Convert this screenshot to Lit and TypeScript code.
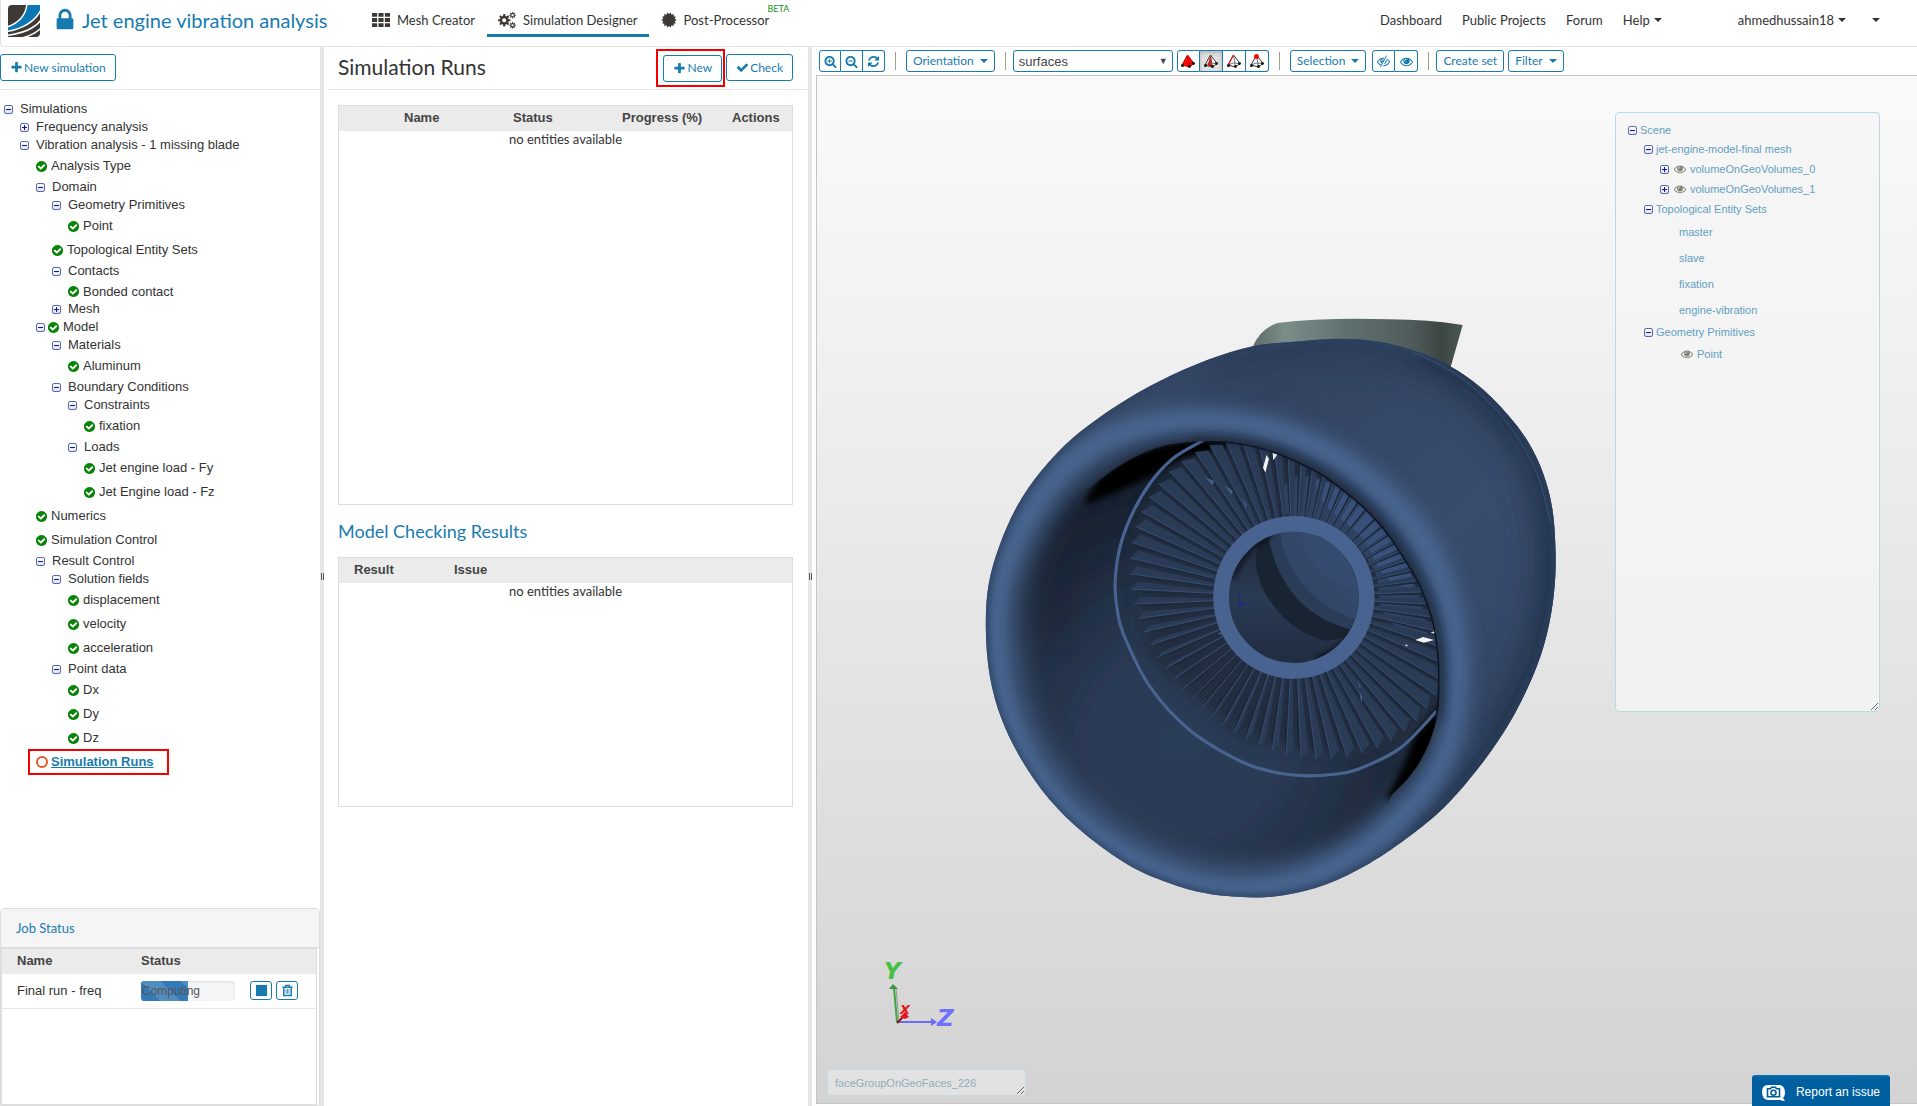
import { LitElement, html, svg, css, nothing } from "lit";
import { customElement, property } from "lit/decorators.js";
import { classMap } from "lit/directives/class-map.js";

type Pt = [number, number];

/* ---------- geometry helpers ---------- */

const n1 = (v: number) => Math.round(v * 10) / 10;

/** Catmull-Rom curve through the given points, as SVG path data. */
function smooth(p: Pt[], closed = false): string {
  const n = p.length;
  const at = (i: number) => (closed ? p[(i + n) % n] : p[Math.max(0, Math.min(n - 1, i))]);
  let d = `M${p[0][0]} ${p[0][1]}`;
  for (let i = 0; i < (closed ? n : n - 1); i++) {
    const [a, b, c, e] = [at(i - 1), at(i), at(i + 1), at(i + 2)];
    d += `C${n1(b[0] + (c[0] - a[0]) / 6)} ${n1(b[1] + (c[1] - a[1]) / 6)} ${n1(c[0] - (e[0] - b[0]) / 6)} ${n1(c[1] - (e[1] - b[1]) / 6)} ${c[0]} ${c[1]}`;
  }
  return closed ? d + "Z" : d;
}

function gear(cx: number, cy: number, r: number, tooth: number, teeth: number, hole: number): string {
  let d = "";
  const step = (Math.PI * 2) / teeth;
  for (let i = 0; i < teeth; i++) {
    const a = i * step;
    const pts: [number, number][] = [
      [a - step * 0.3, r],
      [a - step * 0.2, r + tooth],
      [a + step * 0.2, r + tooth],
      [a + step * 0.3, r],
    ];
    for (const [t, q] of pts) d += `${d ? "L" : "M"}${n1(cx + Math.cos(t) * q)} ${n1(cy + Math.sin(t) * q)}`;
  }
  return `${d}ZM${cx - hole} ${cy}a${hole} ${hole} 0 1 0 ${hole * 2} 0a${hole} ${hole} 0 1 0 ${-hole * 2} 0Z`;
}

function burst(points: number): string {
  let d = "";
  for (let i = 0; i < points * 2; i++) {
    const a = (i * Math.PI) / points;
    const r = i % 2 ? 660 : 860;
    d += `${d ? "L" : "M"}${n1(896 + Math.cos(a) * r)} ${n1(896 + Math.sin(a) * r)}`;
  }
  return d + "Z";
}

/* ---------- icons ---------- */

const LENS =
  "m128 32q0-185-131.5-316.5t-316.5-131.5-316.5 131.5-131.5 316.5 131.5 316.5 316.5 131.5 316.5-131.5 131.5-316.5zm512 832q0 53-37.5 90.5t-90.5 37.5q-54 0-90-38l-343-342q-179 124-399 124-143 0-273.5-55.5t-225-150-150-225-55.5-273.5 55.5-273.5 150-225 225-150 273.5-55.5 273.5 55.5 225 150 150 225 55.5 273.5q0 220-124 399l343 343q37 37 37 90z";
const EYE =
  "M1664 960q-152-236-381-353 61 104 61 225 0 185-131.5 316.5t-316.5 131.5-316.5-131.5-131.5-316.5q0-121 61-225-229 117-381 353 133 205 333.5 326.5t434.5 121.5 434.5-121.5 333.5-326.5zm-720-384q0-20-14-34t-34-14q-125 0-214.5 89.5t-89.5 214.5q0 20 14 34t34 14 34-14 14-34q0-86 61-147t147-61q20 0 34-14t14-34zm848 384q0 34-20 69-140 230-376.5 368.5t-499.5 138.5-499.5-139-376.5-368q-20-35-20-69t20-69q140-229 376.5-368t499.5-139 499.5 139 376.5 368q20 35 20 69z";

const PATHS: Record<string, string> = {
  plus: "M1600 736v192q0 40-28 68t-68 28h-416v416q0 40-28 68t-68 28h-192q-40 0-68-28t-28-68v-416h-416q-40 0-68-28t-28-68v-192q0-40 28-68t68-28h416v-416q0-40 28-68t68-28h192q40 0 68 28t28 68v416h416q40 0 68 28t28 68z",
  check: "M1671 566q0 40-28 68l-724 724-136 136q-28 28-68 28t-68-28l-136-136-362-362q-28-28-28-68t28-68l136-136q28-28 68-28t68 28l294 295 656-657q28-28 68-28t68 28l136 136q28 28 28 68z",
  lock: "M640 768h512v-192q0-106-75-181t-181-75-181 75-75 181v192zm832 96v576q0 40-28 68t-68 28h-960q-40 0-68-28t-28-68v-576q0-40 28-68t68-28h32v-192q0-184 132-316t316-132 316 132 132 316v192h32q40 0 68 28t28 68z",
  done: "M1412 734q0-28-18-46l-91-90q-19-19-45-19t-45 19l-408 407-226-226q-19-19-45-19t-45 19l-91 90q-18 18-18 46 0 27 18 45l362 362q19 19 45 19 27 0 46-19l543-543q18-18 18-45zm252 162q0 209-103 385.5t-279.5 279.5-385.5 103-385.5-103-279.5-279.5-103-385.5 103-385.5 279.5-279.5 385.5-103 385.5 103 279.5 279.5 103 385.5z",
  zoomIn:
    "M1088 800v64q0 13-9.5 22.5t-22.5 9.5h-224v224q0 13-9.5 22.5t-22.5 9.5h-64q-13 0-22.5-9.5t-9.5-22.5v-224h-224q-13 0-22.5-9.5t-9.5-22.5v-64q0-13 9.5-22.5t22.5-9.5h224v-224q0-13 9.5-22.5t22.5-9.5h64q13 0 22.5 9.5t9.5 22.5v224h224q13 0 22.5 9.5t9.5 22.5z" +
    LENS,
  zoomOut:
    "M1088 800v64q0 13-9.5 22.5t-22.5 9.5h-576q-13 0-22.5-9.5t-9.5-22.5v-64q0-13 9.5-22.5t22.5-9.5h576q13 0 22.5 9.5t9.5 22.5z" +
    LENS,
  refresh:
    "M1639 1056q0 5-1 7-64 268-268 434.5t-478 166.5q-146 0-282.5-55t-243.5-157l-129 129q-19 19-45 19t-45-19-19-45v-448q0-26 19-45t45-19h448q26 0 45 19t19 45-19 45l-137 137q71 66 161 102t187 36q134 0 250-65t186-179q11-17 53-117 8-23 30-23h192q13 0 22.5 9.5t9.5 22.5zm25-800v448q0 26-19 45t-45 19h-448q-26 0-45-19t-19-45 19-45l138-138q-148-137-349-137-134 0-250 65t-186 179q-11 17-53 117-8 23-30 23h-199q-13 0-22.5-9.5t-9.5-22.5v-7q65-268 270-434.5t480-166.5q146 0 284 55.5t245 156.5l130-129q19-19 45-19t45 19 19 45z",
  eye: EYE,
  grid: "M0 192h512v384H0zM640 192h512v384H640zM1280 192h512v384h-512zM0 704h512v384H0zM640 704h512v384H640zM1280 704h512v384h-512zM0 1216h512v384H0zM640 1216h512v384H640zM1280 1216h512v384h-512z",
  cogs: gear(620, 920, 450, 170, 8, 210) + gear(1450, 420, 220, 110, 8, 110) + gear(1450, 1420, 220, 110, 8, 110),
  burst: burst(14),
  stop: "M128 128h1536v1536H128z",
};

const icon = (name: string, cls = "") => svg`
  <svg class="icon ${cls}" viewBox="0 0 1792 1792" aria-hidden="true">
    <path fill="currentColor" fill-rule="evenodd" d=${PATHS[name]}></path>
  </svg>`;

const hiddenEye = svg`
  <svg class="icon" viewBox="0 0 1792 1792" aria-hidden="true">
    <path fill="currentColor" d=${EYE}></path>
    <path d="M1400 100L560 1700" stroke="#fff" stroke-width="330"></path>
    <path d="M1290 130L480 1660" stroke="currentColor" stroke-width="130" stroke-linecap="round"></path>
  </svg>`;

const trash = svg`
  <svg class="icon" viewBox="0 0 14 14" aria-hidden="true" fill="none" stroke="currentColor">
    <path d="M1.500 3.500h11M5 3V1.500h4V3" stroke-width="1.400"></path>
    <path d="M3 4v8.500h8V4" stroke-width="1.600"></path>
    <path d="M5.500 5.500v5M7 5.500v5M8.500 5.500v5" stroke-width=".8"></path>
  </svg>`;

const caret = svg`<svg class="caret" viewBox="0 0 8 4" aria-hidden="true"><path fill="currentColor" d="M0 0h8L4 4z"></path></svg>`;

const bubble = svg`
  <svg class="bubble" viewBox="0 0 25 17" aria-hidden="true">
    <path fill="#fff" d="M7 1h12q5 1 5 8 0 3-2 5l2 3q-2 0-5-1H7q-6-1-6-8t6-7z"></path>
    <path fill="none" stroke="#00609f" stroke-width="1.600" d="M6.500 4.800h3l1-1.500h4l1 1.500h3v8h-12z"></path>
    <circle cx="12.500" cy="8.800" r="2.500" fill="none" stroke="#00609f" stroke-width="1.600"></circle>
  </svg>`;

const logo = svg`
  <svg class="logo" viewBox="0 0 32 32" aria-hidden="true">
    <defs><clipPath id="tile"><path d="M4 0H32V28Q32 32 28 32H0V4Q0 0 4 0Z"></path></clipPath></defs>
    <g clip-path="url(#tile)">
      <rect width="32" height="32" fill="#3d3935"></rect>
      <path d="M19 0Q17 16 0 22V26Q24 21 32 6V0Z" fill="#0b78b5"></path>
      <g fill="none" stroke="#fff" stroke-width="1.500">
        <path d="M19 -1Q17 16 -1 22"></path><path d="M33 5Q24 22 -1 26.500"></path>
        <path d="M33 15Q24 27 -1 30.500"></path><path d="M33 23Q26 30 14 33"></path>
      </g>
    </g>
  </svg>`;

/** Tetrahedron glyphs of the four picking modes. */
const tetra = (mode: number) => svg`
  <svg class="tetra" viewBox="0 0 14 14" aria-hidden="true">
    <path d="M6.500 1L1 11l7.500 2L13 9z" fill=${mode === 0 ? "#f30d0d" : "#fff"}></path>
    ${mode === 1 ? svg`<path d="M6.500 1L3.500 11.500l5 1.500z" fill="#f30d0d"></path>` : nothing}
    <path d="M6.500 1L13 9.500 8.500 13 1 11z" fill="none" stroke=${mode === 0 ? "#c00" : "#333"} stroke-width="1"></path>
    <path d="M6.500 1L8.500 13M1 11L6 9l7 .5" fill="none" stroke=${mode === 0 ? "#d00" : "#555"} stroke-width=".8"></path>
    ${mode === 2 ? svg`<path d="M6.500 1L1 11" stroke="#f30d0d" stroke-width="1.200"></path>` : nothing}
    <g fill="#111"><circle cx="1.500" cy="11.500" r="1.500"></circle><circle cx="8.500" cy="12.500" r="1.400"></circle><circle cx="12.500" cy="9.500" r="1.400"></circle></g>
    ${mode === 3 ? svg`<circle cx="6.500" cy="2.500" r="2.500" fill="#f30d0d"></circle>` : nothing}
  </svg>`;

/* ---------- shared styles ---------- */

const shared = css`
  * { box-sizing: border-box; }
  button, select { font: inherit; color: inherit; margin: 0; cursor: pointer; }
  a { color: inherit; text-decoration: none; }
  .icon { display: block; flex: none; width: 14px; height: 14px; }
  .caret { display: block; flex: none; width: 8px; height: 4px; }
  .toggle {
    flex: none; width: 9px; height: 9px; padding: 0; position: relative;
    border: 1px solid #5a6aae; border-radius: 2px;
    background: linear-gradient(#fff, #e0e2ea);
  }
  .toggle::before, .toggle.plus::after {
    content: ""; position: absolute; left: 1px; top: 3px; width: 5px; height: 1px; background: #1010b0;
  }
  .toggle.plus::after { left: 3px; top: 1px; width: 1px; height: 5px; }
`;

/* ---------- navigation trees ---------- */

interface Row {
  label: string;
  level: number;
  kind: "open" | "closed" | "leaf";
  state?: "done" | "todo" | "eye";
  size?: "tight";
}

const r = (level: number, kind: Row["kind"], label: string, state?: Row["state"], size?: Row["size"]): Row => ({ level, kind, label, state, size });

const SIMULATION: Row[] = [
  r(0, "open", "Simulations"),
  r(1, "closed", "Frequency analysis"),
  r(1, "open", "Vibration analysis - 1 missing blade"),
  r(2, "leaf", "Analysis Type", "done"),
  r(2, "open", "Domain"),
  r(3, "open", "Geometry Primitives"),
  r(4, "leaf", "Point", "done"),
  r(3, "leaf", "Topological Entity Sets", "done"),
  r(3, "open", "Contacts"),
  r(4, "leaf", "Bonded contact", "done", "tight"),
  r(3, "closed", "Mesh"),
  r(2, "open", "Model", "done"),
  r(3, "open", "Materials"),
  r(4, "leaf", "Aluminum", "done"),
  r(3, "open", "Boundary Conditions"),
  r(4, "open", "Constraints"),
  r(5, "leaf", "fixation", "done"),
  r(4, "open", "Loads"),
  r(5, "leaf", "Jet engine load - Fy", "done"),
  r(5, "leaf", "Jet Engine load - Fz", "done"),
  r(2, "leaf", "Numerics", "done"),
  r(2, "leaf", "Simulation Control", "done"),
  r(2, "open", "Result Control"),
  r(3, "open", "Solution fields"),
  r(4, "leaf", "displacement", "done"),
  r(4, "leaf", "velocity", "done"),
  r(4, "leaf", "acceleration", "done"),
  r(3, "open", "Point data"),
  r(4, "leaf", "Dx", "done"),
  r(4, "leaf", "Dy", "done"),
  r(4, "leaf", "Dz", "done"),
  r(2, "leaf", "Simulation Runs", "todo"),
];

const SCENE: Row[] = [
  r(0, "open", "Scene", undefined, "tight"),
  r(1, "open", "jet-engine-model-final mesh"),
  r(2, "closed", "volumeOnGeoVolumes_0", "eye"),
  r(2, "closed", "volumeOnGeoVolumes_1", "eye"),
  r(1, "open", "Topological Entity Sets"),
  r(3, "leaf", "master"),
  r(3, "leaf", "slave"),
  r(3, "leaf", "fixation"),
  r(3, "leaf", "engine-vibration"),
  r(1, "open", "Geometry Primitives", undefined, "tight"),
  r(3, "leaf", "Point", "eye"),
];

@customElement("nav-tree")
export class NavTree extends LitElement {
  @property({ attribute: false }) rows: Row[] = [];

  static styles = [
    shared,
    css`
      :host { display: block; }
      ul { list-style: none; margin: 0; padding: 0; }
      .row { display: flex; align-items: center; height: var(--row, 18px); white-space: nowrap; }
      .row.leaf { height: var(--leaf, 24px); padding-left: var(--leaf-pad, 0px); }
      .row.tight { height: 18px; }
      .row.leaf.tight { height: 20px; padding-top: 3px; }
      .l1 { margin-left: 16px; } .l2 { margin-left: 32px; } .l3 { margin-left: 48px; }
      .l4 { margin-left: 64px; } .l5 { margin-left: 80px; }
      .toggle { margin-right: var(--label-gap, 7px); }
      .done { color: #078307; width: 13px; height: 13px; margin: 0 3px 0 -1px; }
      .row:not(.leaf) .toggle:has(+ .done) { margin-right: 3px; }
      .ring { width: 12px; height: 12px; flex: none; border: 2px solid #e0592b; border-radius: 50%; margin-right: 3px; }
      .eye { color: #85857c; width: 12px; height: 12px; margin: 0 4px 0 2px; }
      .row.todo { width: 141px; height: 26px; margin: -1px 0 0 24px; padding-left: 6px; border: 2px solid #f50000; }
      .todo a { color: #187bb0; font-weight: bold; text-decoration: underline; }
    `,
  ];

  render() {
    return html`<ul>
      ${this.rows.map(
        (row) => html`<li class=${classMap({ row: true, leaf: row.kind === "leaf", tight: row.size === "tight", todo: row.state === "todo", [`l${row.level}`]: row.state !== "todo" })}>
          ${row.kind === "leaf"
            ? nothing
            : html`<button class="toggle ${row.kind === "closed" ? "plus" : ""}" aria-label="Toggle ${row.label}" aria-expanded=${row.kind === "open"}></button>`}
          ${row.state === "done" ? icon("done", "done") : row.state === "eye" ? icon("eye", "eye") : row.state === "todo" ? html`<span class="ring"></span>` : nothing}
          <a href="#">${row.label}</a>
        </li>`
      )}
    </ul>`;
  }
}

/* ---------- 3D view ---------- */

const BODY: Pt[] = [
  [40, 830], [47, 720], [75, 620], [120, 520], [182, 430], [262, 347], [370, 268], [480, 205], [600, 152], [715, 117],
  [830, 105], [930, 98], [1030, 105], [1130, 130], [1215, 168], [1290, 220], [1360, 290], [1412, 360], [1450, 440],
  [1473, 530], [1481, 640], [1477, 740], [1460, 840], [1428, 940], [1370, 1060], [1300, 1165], [1210, 1272], [1120, 1350],
  [1010, 1425], [900, 1478], [800, 1504], [715, 1511], [600, 1501], [500, 1473], [400, 1428], [290, 1350], [200, 1262],
  [130, 1162], [80, 1060], [50, 950],
];
const LIP: Pt[] = [
  [66, 830], [84, 690], [144, 550], [244, 420], [370, 342], [520, 308], [680, 312], [830, 352], [965, 425], [1080, 525],
  [1165, 645], [1215, 790], [1230, 930], [1222, 1060], [1180, 1185], [1100, 1295], [980, 1398], [840, 1466], [690, 1490],
  [540, 1468], [398, 1408], [262, 1310], [157, 1180], [88, 1020],
];
const MOUTH: Pt[] = [
  [138, 830], [158, 690], [224, 555], [306, 462], [420, 393], [520, 362], [640, 357], [770, 383], [900, 445], [1000, 525],
  [1080, 620], [1145, 735], [1178, 840], [1188, 960], [1180, 1060], [1142, 1160], [1068, 1250], [960, 1340], [830, 1400],
  [690, 1416], [550, 1394], [405, 1328], [270, 1212], [176, 1046],
];
/* Hard edge of the intake opening; the left and lower sides fade into the lip instead. */
const OPENING =
  "M640 357C700 363 720 368 770 384C830 406 870 428 900 446C950 482 970 498 1000 526C1040 565 1060 590 1080 622C1120 685 1135 705 1146 736C1165 785 1172 805 1178 840C1186 890 1188 920 1188 960C1188 1010 1186 1030 1180 1060";
const RING: Pt[] = [
  [590, 355], [514, 400], [455, 464], [405, 552], [377, 635], [367, 717], [372, 780], [388, 845], [455, 978], [556, 1088],
  [683, 1166], [765, 1193], [843, 1203], [915, 1200], [978, 1188], [1087, 1134], [1180, 1040],
];

const HUB: Pt = [820, 752];
const tipRadius = (a: number) => 402 + 42 * Math.cos(2 * (a - Math.PI / 4)) - 6 * Math.cos(a);
const polar = (a: number, q: number): Pt => [n1(HUB[0] + Math.cos(a) * q), n1(HUB[1] + Math.sin(a) * q)];

const BLADES = Array.from({ length: 68 }, (_, i) => {
  const a = (i * Math.PI * 2) / 68 + 0.05;
  const lean = Math.cos(a - Math.PI / 4);
  const twist = -0.068 * lean;
  const dark = lean > 0 ? 0.018 : -0.018;
  const R = tipRadius(a);
  const [h, t] = [polar(a, 200), polar(a, R)];
  const [h2, t2] = [polar(a + twist * 0.7, 200), polar(a + twist, R - 14)];
  const [h3, t3] = [polar(a + dark, 200), polar(a + dark * 1.2, R - 34)];
  return {
    face: `M${h}L${t}L${t2}L${h2}Z`,
    shade: `M${h}L${t}L${t3}L${h3}Z`,
    edge: `M${h}L${t}`,
  };
});

@customElement("engine-view")
export class EngineView extends LitElement {
  static styles = css`
    :host { display: block; width: 100%; height: 100%; }
    .scene { display: block; width: 100%; height: 100%; }
    .axis { font-family: "DejaVu Sans", sans-serif; font-style: oblique; font-weight: bold; }
  `;

  render() {
    const body = smooth(BODY, true);
    const mouth = smooth(MOUTH, true);
    return html`<svg class="scene" viewBox="817 76 1100 1027" role="img" aria-label="Jet engine model">
      <defs>
        <linearGradient id="pylon"><stop offset="0" stop-color="#5c6c68"></stop><stop offset=".15" stop-color="#7b8d89"></stop><stop offset=".45" stop-color="#607070"></stop><stop offset=".75" stop-color="#505c5b"></stop><stop offset=".9" stop-color="#3c4645"></stop><stop offset="1" stop-color="#4b5756"></stop></linearGradient>
        <linearGradient id="shell" x1="0" y1="0" x2=".8" y2="1"><stop offset="0" stop-color="#3a4f70"></stop><stop offset=".3" stop-color="#334461"></stop><stop offset=".6" stop-color="#384c6d"></stop><stop offset="1" stop-color="#324462"></stop></linearGradient>
        <radialGradient id="duct" gradientUnits="userSpaceOnUse" cx="540" cy="1120" r="800"><stop offset="0" stop-color="#2c3c57"></stop><stop offset=".3" stop-color="#2a3a54"></stop><stop offset=".6" stop-color="#202c3f"></stop><stop offset="1" stop-color="#111a26"></stop></radialGradient>
        <linearGradient id="bore" x1="0" y1="0" x2="0" y2="1"><stop offset="0" stop-color="#1d2838"></stop><stop offset=".5" stop-color="#2a3a54"></stop><stop offset="1" stop-color="#202c40"></stop></linearGradient>
        <linearGradient id="deep" x1="0" y1="1" x2="1" y2="0"><stop offset="0" stop-color="#304464"></stop><stop offset="1" stop-color="#354b6e"></stop></linearGradient>
        <filter id="b8" x="-20%" y="-20%" width="140%" height="140%"><feGaussianBlur stdDeviation="8"></feGaussianBlur></filter>
        <filter id="b20" x="-20%" y="-20%" width="140%" height="140%"><feGaussianBlur stdDeviation="22"></feGaussianBlur></filter>
        <filter id="b40" x="-30%" y="-30%" width="160%" height="160%"><feGaussianBlur stdDeviation="38"></feGaussianBlur></filter>
        <clipPath id="inBody"><path d=${body}></path></clipPath>
        <clipPath id="inMouth"><path d="${OPENING}C1170 1100 1160 1130 1142 1160C1120 1200 1090 1230 1068 1250L960 1460H60V480L300 478Q400 390 500 366Q560 354 640 357Z"></path></clipPath>
        <clipPath id="inBore"><ellipse cx="818" cy="752" rx="164" ry="166"></ellipse></clipPath>
      </defs>
      <g transform="translate(970 300) scale(.3954)">
        <path d="M715 118Q735 72 778 58Q900 44 1060 49Q1160 50 1246 63L1214 175L900 260Z" fill="url(#pylon)"></path>
        <path d=${body} fill="url(#shell)"></path>
        <g clip-path="url(#inBody)">
          <path d=${smooth([[600, 170], [930, 120], [1180, 180], [1380, 370], [1450, 600], [1430, 840], [1300, 1120]])} fill="none" stroke="#2b3a55" stroke-width="60" filter="url(#b40)"></path>
          <path d=${smooth([[1130, 130], [1290, 220], [1412, 360], [1473, 530], [1481, 640], [1477, 740], [1428, 940], [1300, 1165], [1120, 1350]])} fill="none" stroke="#1f2d44" stroke-width="34" filter="url(#b20)"></path>
          <path d=${smooth(LIP, true)} fill="none" stroke="#4a6793" stroke-width="62" filter="url(#b20)"></path>
          <path d=${body} fill="none" stroke="#2c4061" stroke-width="12" filter="url(#b8)"></path>
          <path d=${smooth([[1120, 130], [1240, 195], [1350, 300], [1430, 430], [1468, 560]])} fill="none" stroke="#41587f" stroke-width="2"></path>
          <path d=${mouth} fill="url(#duct)" filter="url(#b20)"></path>
          <g clip-path="url(#inMouth)">
            <path d=${smooth([[225, 880], [235, 740], [290, 600], [390, 470]])} fill="none" stroke="#141d2a" stroke-width="50" opacity=".35" filter="url(#b40)"></path>
            <path d="M640 357C720 365 800 395 900 446C1010 530 1090 620 1146 736C1180 840 1190 900 1188 960L1180 1060L1120 1150L700 1120L440 900L420 560L560 370Z" fill="#202d40" filter="url(#b20)"></path>
            <path d="M290 515Q310 455 380 410Q480 350 640 350L700 352L600 385Q520 395 470 440Q420 465 290 520Z" fill="#000" filter="url(#b8)"></path>
            <path d="M1200 1000Q1165 1060 1125 1100Q1100 1180 1050 1262L1110 1260L1210 1080Z" fill="#000" filter="url(#b8)"></path>
            <path d=${smooth([[800, 462], [880, 450], [980, 520], [1080, 640], [1140, 760], [1150, 860], [1050, 800], [1020, 680], [930, 580], [800, 540]], true)} fill="#2f4261"></path>
            <path d=${smooth([[880, 455], [980, 500], [1080, 620], [1120, 720], [1050, 700], [990, 600], [900, 520]], true)} fill="#38507a"></path>
            ${BLADES.map((b) => svg`<path d=${b.shade} fill="#1d293b"></path><path d=${b.face} fill="#2a3b56"></path><path d=${b.edge} stroke="#3d557c" stroke-width="2"></path>`)}
            <g fill="#44608c"><path d="M594 448l24 10-4 10zM644 470l20 12-2 10zM688 500l12 18-2 8zM980 958l8 20-2 4zM984 990l8 16-2 14zM626 844l14-6v8z"></path></g>
            <path d=${smooth(RING)} fill="none" stroke="#48638f" stroke-width="8"></path>
            <g fill="#f2f2f2"><path d="M741 424l9-32 6 10-9 34zM765 384l14 5-12 16zM1126 860l20-8 28 8-26 7zM1164 842l14-6 2 8zM1100 871l9 2-6 3z"></path></g>
            <path d=${OPENING} fill="none" stroke="#0b121c" stroke-width="8"></path>
          </g>
          <path d="M560 350C700 352 720 362 776 378C836 400 876 422 906 440C956 476 976 492 1007 520C1046 560 1067 585 1087 616C1127 680 1142 700 1153 731C1172 780 1180 800 1186 836C1194 890 1196 920 1196 960C1196 1010 1194 1030 1188 1060" fill="none" stroke="#1d2a3f" stroke-width="10" opacity=".75" filter="url(#b8)"></path>
        </g>
        <g clip-path="url(#inBore)">
          <rect x="650" y="580" width="340" height="345" fill="url(#bore)"></rect>
          <path d="M755 570Q700 640 740 730Q800 840 900 862Q940 860 990 830V570Z" fill="#192433"></path>
          <path d="M752 570Q760 680 830 758Q890 820 985 838V570Z" fill="#2b3c58"></path>
          <path d="M782 570Q790 670 860 740Q910 790 990 812V570Z" fill="url(#deep)"></path>
          <path d="M830 570Q850 660 900 700Q940 730 990 745V570Z" fill="#3a5178" opacity=".35"></path>
          <path d=${smooth([[660, 700], [700, 630], [760, 590]])} fill="none" stroke="#080c12" stroke-width="16" filter="url(#b8)"></path>
          <path d=${smooth([[970, 850], [930, 890], [880, 915]])} fill="none" stroke="#05080c" stroke-width="22" filter="url(#b8)"></path>
        </g>
        <ellipse cx="819" cy="752" rx="184" ry="186" fill="none" stroke="#48638f" stroke-width="40"></ellipse>
        <g stroke="#1c2690" stroke-width="2" fill="#1c2690"><path d="M679 740l4 29 28 1" fill="none"></path><circle cx="683" cy="769" r="4"></circle></g>
      </g>
      <g fill="none" stroke-width="2">
        <path d="M897 1022L894 988" stroke="#3fa43f"></path>
        <path d="M899 1022L896 988" stroke="#8d9a8d" stroke-width="1"></path>
        <path d="M897 1022L932 1022" stroke="#6b6bf5"></path>
        <path d="M897 1023L904 1016" stroke="#8b1616"></path>
      </g>
      <path d="M889 989l4-5 5 5z" fill="#3f953f"></path>
      <path d="M931 1018l6 4-6 4z" fill="#6b6bf5"></path>
      <path d="M900 1017l5-5 4 5-4 2z" fill="#e31818"></path>
      <g class="axis">
        <text x="884" y="979" font-size="23" fill="#43c143">Y</text>
        <text x="900" y="1014" font-size="13" fill="#e81414">X</text>
        <text x="937" y="1026" font-size="23" fill="#7070ff">Z</text>
      </g>
    </svg>`;
  }
}

/* ---------- application shell ---------- */

@customElement("app-root")
export class AppRoot extends LitElement {
  static styles = [
    shared,
    css`
      :host {
        display: flex; flex-direction: column; height: 100vh; position: relative; overflow: hidden;
        background: #fff; color: #333; font: 13px/18px Lato, sans-serif;
        --blue: #187bb0; --line: #ddd; --sans: "Liberation Sans", Arial, sans-serif;
      }
      h1, h2, h3 { margin: 0; font-weight: normal; }

      .top { display: flex; align-items: center; flex: none; height: 47px; padding: 0 37px 4px 8px; border: solid #e2e2e2; border-width: 0 0 1px 1px; border-bottom-left-radius: 4px; white-space: nowrap; }
      .logo { width: 32px; height: 32px; margin: 0 11px 0 -1px; flex: none; }
      .lock { width: 26px; height: 26px; color: var(--blue); margin: -3px 2px 0 1px; }
      .title { color: var(--blue); font-size: 20px; line-height: 24px; width: 279px; margin-left: 2px; padding-bottom: 2px; }
      .tabs { display: flex; gap: 1px; }
      .tab { display: flex; align-items: center; gap: 7px; height: 30px; margin-top: 2px; padding: 0 11px 2px; border-bottom: 3px solid transparent; position: relative; }
      .tab.on { border-color: var(--blue); }
      .tab .icon { width: 18px; height: 18px; color: #3d3935; }
      .tab .seal { width: 16px; height: 16px; }
      .beta { position: absolute; left: 118px; top: -3px; font-size: 9px; line-height: 9px; color: #159415; }
      .links { display: flex; align-items: center; gap: 20px; margin: 0 0 0 auto; }
      .links a { display: flex; align-items: center; gap: 4px; padding-bottom: 2px; }
      .links .user { margin-left: 56px; }
      .links .more { margin-left: 6px; }

      .work { display: flex; flex: 1; min-height: 0; }
      .side { width: 320px; flex: none; display: flex; flex-direction: column; min-height: 0; }
      .split { width: 4px; flex: none; background: #e6e6e6; display: flex; align-items: center; }
      .grip { width: 4px; height: 7px; border: solid #555; border-width: 0 1px; margin-left: 1px; }
      .bar { height: 43px; flex: none; display: flex; align-items: center; padding-bottom: 1px; border-bottom: 1px solid #e6e6e6; }
      .btn { display: inline-flex; align-items: center; justify-content: center; gap: 1px; height: 27px; padding: 0 9px; border: 1px solid var(--blue); border-radius: 3px; background: #fff; color: var(--blue); font-size: 12px; line-height: 16px; white-space: nowrap; }
      .btn .icon { width: 13px; height: 13px; }
      .side .tree { flex: 1; min-height: 0; overflow: hidden; padding: 10px 0 0 4px; font: 13px/16px var(--sans); }

      .jobs { flex: none; height: 198px; border: 1px solid var(--line); border-radius: 4px 4px 0 0; display: flex; flex-direction: column; }
      .jobs h3 { height: 39px; flex: none; background: #f5f5f5; border-bottom: 1px solid var(--line); border-radius: 4px 4px 0 0; color: var(--blue); padding: 10px 15px; font-size: 13px; }
      .jobs .box { flex: 1; margin: 0 2px 0 0; border: 1px solid var(--line); }
      table { border-collapse: collapse; width: 100%; table-layout: fixed; font: 13px/16px var(--sans); }
      th { background: #ebebeb; color: #444; text-align: left; height: 25px; padding: 0 0 2px 8px; font-weight: bold; }
      .jobs th, .jobs td { padding-left: 15px; }
      .jobs td { height: 34px; border-bottom: 1px solid #e6e6e6; padding-top: 0; padding-bottom: 0; }
      .jobs .name { width: 124px; }
      .jobs .job { display: flex; align-items: center; gap: 4px; }
      .progress { position: relative; width: 94px; height: 20px; margin-right: 11px; border-radius: 3px; background: #f5f5f5; box-shadow: inset 0 1px 2px rgba(0, 0, 0, 0.1); overflow: hidden; }
      .fill { height: 100%; background: repeating-linear-gradient(45deg, #337ab7 0 14px, #528dc1 14px 28px); }
      .status { position: absolute; left: 1px; top: 2px; color: #555; font-size: 12px; }
      .mini { width: 22px; height: 19px; padding: 0; }

      .runs { width: 484px; flex: none; padding-left: 4px; }
      .runs .bar { justify-content: space-between; padding: 0 15px 1px 10px; }
      .runs h1 { font-size: 21px; line-height: 28px; padding-bottom: 1px; }
      .runs .acts { display: flex; align-items: center; gap: 1px; }
      .mark { display: flex; border: 2px solid #f50000; padding: 4px 1px 3px 5px; }
      .runs .body { padding: 15px 15px 0 10px; }
      .runs .box { border: 1px solid var(--line); }
      .runs .tall { height: 400px; }
      .runs .short { height: 250px; }
      .runs h2 { color: var(--blue); font-size: 18px; line-height: 24px; padding: 14px 0; }
      .none { font: 13px/16px Lato, sans-serif; text-align: center; padding: 0; }

      .view { flex: 1; min-width: 0; display: flex; flex-direction: column; padding: 0 0 2px 4px; }
      .tools { display: flex; align-items: center; height: 28px; flex: none; padding: 0 0 0 3px; color: var(--blue); }
      .tools .btn { height: 22px; padding: 0 6px; gap: 6px; }
      .group { display: flex; margin: 0; }
      .group .btn { width: 23px; padding: 0; border-radius: 0; }
      .group.nav .btn { width: 22px; }
      .group .btn + .btn { border-left: 0; }
      .group .btn:first-child { border-radius: 3px 0 0 3px; }
      .group .btn:last-child { border-radius: 0 3px 3px 0; }
      .group .btn.down { background: #e2e2e2; box-shadow: inset 0 2px 4px rgba(0, 0, 0, 0.2); }
      .sep { width: 1px; height: 18px; background: #a39a90; margin: 0 10px; }
      .sep.near { margin-right: 7px; }
      .pick { position: relative; display: flex; margin-right: 4px; color: #444; font-family: var(--sans); }
      .pick select { appearance: none; width: 160px; height: 22px; border: 1px solid var(--blue); border-radius: 3px; background: #fff; padding: 1px 5px 0; font-size: 13px; line-height: 16px; }
      .pick span { position: absolute; right: 5px; top: 2px; font-size: 9px; pointer-events: none; }
      .tetra { width: 14px; height: 14px; }
      .space6 { margin-right: 6px; }
      .space4 { margin-right: 4px; }

      .canvas { position: relative; flex: 1; min-height: 0; border: solid #c4c4c4; border-width: 1px 0 1px 1px; background: linear-gradient(#fafafa, #f2f2f2 22%, #d3d3d3); }
      .scene { position: absolute; top: 36px; right: 37px; width: 265px; height: 600px; padding: 8px 12px; border: 1px solid #b4dbe8; border-radius: 4px; background: rgba(245, 245, 245, 0.8); color: #62a0c0; font: 11px/16px var(--sans); resize: both; overflow: hidden; --row: 20px; --leaf: 26px; --label-gap: 3px; --leaf-pad: 3px; }
      .picked { position: absolute; left: 10px; bottom: 7px; width: 199px; height: 27px; padding: 5px 7px; border: 1px solid #c5dbe4; border-radius: 4px; background: #e2e2e2; color: #93aebb; font: 11px/16px var(--sans); resize: both; overflow: hidden; }
      .report { position: absolute; right: 27px; bottom: 0; display: flex; align-items: center; gap: 10px; height: 31px; padding: 3px 10px 0 9px; border: 0; border-radius: 3px 3px 0 0; background: linear-gradient(#0a72b5, #00609f 3px); color: #fff; font: 12px/16px var(--sans); }
      .bubble { width: 25px; height: 17px; }
    `,
  ];

  private top() {
    return html`<header class="top">
      ${logo} ${icon("lock", "lock")}
      <div class="title">Jet engine vibration analysis</div>
      <nav class="tabs">
        <a class="tab" href="#">${icon("grid")}Mesh Creator</a>
        <a class="tab on" href="#">${icon("cogs")}Simulation Designer</a>
        <a class="tab" href="#">${icon("burst", "seal")}Post-Processor<span class="beta">BETA</span></a>
      </nav>
      <nav class="links">
        <a href="#">Dashboard</a><a href="#">Public Projects</a><a href="#">Forum</a><a href="#">Help ${caret}</a>
        <a class="user" href="#">ahmedhussain18 ${caret}</a><a class="more" href="#" aria-label="More">${caret}</a>
      </nav>
    </header>`;
  }

  private side() {
    return html`<aside class="side">
      <div class="bar"><button class="btn">${icon("plus")}New simulation</button></div>
      <nav-tree class="tree" .rows=${SIMULATION}></nav-tree>
      <section class="jobs">
        <h3>Job Status</h3>
        <div class="box">
          <table>
            <thead><tr><th class="name">Name</th><th>Status</th></tr></thead>
            <tbody>
              <tr>
                <td>Final run - freq</td>
                <td>
                  <div class="job">
                    <div class="progress"><div class="fill" style="width:50%"></div><span class="status">Computing</span></div>
                    <button class="btn mini" aria-label="Stop">${icon("stop")}</button>
                    <button class="btn mini" aria-label="Delete">${trash}</button>
                  </div>
                </td>
              </tr>
            </tbody>
          </table>
        </div>
      </section>
    </aside>`;
  }

  private runs() {
    return html`<main class="runs">
      <div class="bar">
        <h1>Simulation Runs</h1>
        <div class="acts">
          <div class="mark"><button class="btn">${icon("plus")}New</button></div>
          <button class="btn">${icon("check")}Check</button>
        </div>
      </div>
      <div class="body">
        <div class="box tall">
          <table>
            <colgroup><col width="57" /><col width="109" /><col width="109" /><col width="110" /><col /></colgroup>
            <thead><tr><th></th><th>Name</th><th>Status</th><th>Progress (%)</th><th>Actions</th></tr></thead>
            <tbody><tr><td class="none" colspan="5">no entities available</td></tr></tbody>
          </table>
        </div>
        <h2>Model Checking Results</h2>
        <div class="box short">
          <table>
            <colgroup><col width="7" /><col width="100" /><col /></colgroup>
            <thead><tr><th></th><th>Result</th><th>Issue</th></tr></thead>
            <tbody><tr><td class="none" colspan="3">no entities available</td></tr></tbody>
          </table>
        </div>
      </div>
    </main>`;
  }

  private view() {
    return html`<section class="view">
      <div class="tools">
        <div class="group nav">
          <button class="btn" aria-label="Zoom in">${icon("zoomIn")}</button><button class="btn" aria-label="Zoom out">${icon("zoomOut")}</button><button class="btn" aria-label="Reset view">${icon("refresh")}</button>
        </div>
        <span class="sep"></span>
        <button class="btn">Orientation ${caret}</button>
        <span class="sep near"></span>
        <label class="pick"><select aria-label="Render mode"><option>surfaces</option></select><span>▼</span></label>
        <div class="group">
          ${["Pick volumes", "Pick faces", "Pick edges", "Pick nodes"].map((t, i) => html`<button class="btn ${i === 1 ? "down" : ""}" aria-label=${t}>${tetra(i)}</button>`)}
        </div>
        <span class="sep"></span>
        <button class="btn space6">Selection ${caret}</button>
        <div class="group">
          <button class="btn" aria-label="Hide selection">${hiddenEye}</button><button class="btn" aria-label="Show all">${icon("eye")}</button>
        </div>
        <span class="sep near"></span>
        <button class="btn space4">Create set</button>
        <button class="btn">Filter ${caret}</button>
      </div>
      <div class="canvas">
        <engine-view></engine-view>
        <div class="scene"><nav-tree .rows=${SCENE}></nav-tree></div>
        <div class="picked">faceGroupOnGeoFaces_226</div>
      </div>
    </section>`;
  }

  render() {
    return html`${this.top()}
      <div class="work">
        ${this.side()}
        <div class="split"><span class="grip"></span></div>
        ${this.runs()}
        <div class="split"><span class="grip"></span></div>
        ${this.view()}
      </div>
      <button class="report">${bubble}Report an issue</button>`;
  }
}
